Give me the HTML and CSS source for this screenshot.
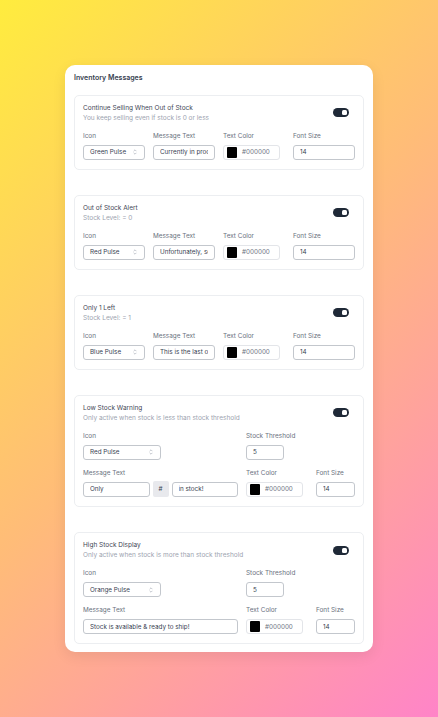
FILE: index.html
```html
<!DOCTYPE html>
<html lang="en">
<head>
    <meta charset="UTF-8">
    <meta name="viewport" content="width=device-width, initial-scale=1.0">
    <title>Inventory Messages</title>
    <link rel="stylesheet" href="styles.css">
</head>
<body>
    <div class="panel">
        <h2 class="panel-title">Inventory Messages</h2>
        <div class="sections">

            <div class="section">
                <div class="section-head">
                    <div>
                        <div class="section-title">Continue Selling When Out of Stock</div>
                        <div class="section-sub">You keep selling even if stock is 0 or less</div>
                    </div>
                    <span class="toggle"><span class="knob"></span></span>
                </div>
                <div class="grid4">
                    <div class="field">
                        <label>Icon</label>
                        <div class="select">Green Pulse
                            <svg width="4" height="6" viewBox="0 0 4 6"><path d="M0.6 2.2 2 0.8 3.4 2.2M0.6 3.8 2 5.2 3.4 3.8" fill="none" stroke="#9ca3af" stroke-width="0.6"/></svg>
                        </div>
                    </div>
                    <div class="field">
                        <label>Message Text</label>
                        <input class="input" type="text" value="Currently in production">
                    </div>
                    <div class="field">
                        <label>Text Color</label>
                        <div class="color"><span class="swatch"></span>#000000</div>
                    </div>
                    <div class="field">
                        <label>Font Size</label>
                        <input class="input" type="text" value="14">
                    </div>
                </div>
            </div>

            <div class="section">
                <div class="section-head">
                    <div>
                        <div class="section-title">Out of Stock Alert</div>
                        <div class="section-sub">Stock Level: = 0</div>
                    </div>
                    <span class="toggle"><span class="knob"></span></span>
                </div>
                <div class="grid4">
                    <div class="field">
                        <label>Icon</label>
                        <div class="select">Red Pulse
                            <svg width="4" height="6" viewBox="0 0 4 6"><path d="M0.6 2.2 2 0.8 3.4 2.2M0.6 3.8 2 5.2 3.4 3.8" fill="none" stroke="#9ca3af" stroke-width="0.6"/></svg>
                        </div>
                    </div>
                    <div class="field">
                        <label>Message Text</label>
                        <input class="input" type="text" value="Unfortunately, sold out!">
                    </div>
                    <div class="field">
                        <label>Text Color</label>
                        <div class="color"><span class="swatch"></span>#000000</div>
                    </div>
                    <div class="field">
                        <label>Font Size</label>
                        <input class="input" type="text" value="14">
                    </div>
                </div>
            </div>

            <div class="section">
                <div class="section-head">
                    <div>
                        <div class="section-title">Only 1 Left</div>
                        <div class="section-sub">Stock Level: = 1</div>
                    </div>
                    <span class="toggle"><span class="knob"></span></span>
                </div>
                <div class="grid4">
                    <div class="field">
                        <label>Icon</label>
                        <div class="select">Blue Pulse
                            <svg width="4" height="6" viewBox="0 0 4 6"><path d="M0.6 2.2 2 0.8 3.4 2.2M0.6 3.8 2 5.2 3.4 3.8" fill="none" stroke="#9ca3af" stroke-width="0.6"/></svg>
                        </div>
                    </div>
                    <div class="field">
                        <label>Message Text</label>
                        <input class="input" type="text" value="This is the last one!">
                    </div>
                    <div class="field">
                        <label>Text Color</label>
                        <div class="color"><span class="swatch"></span>#000000</div>
                    </div>
                    <div class="field">
                        <label>Font Size</label>
                        <input class="input" type="text" value="14">
                    </div>
                </div>
            </div>

            <div class="section">
                <div class="section-head">
                    <div>
                        <div class="section-title">Low Stock Warning</div>
                        <div class="section-sub">Only active when stock is less than stock threshold</div>
                    </div>
                    <span class="toggle"><span class="knob"></span></span>
                </div>
                <div class="grid-split">
                    <div class="field">
                        <label>Icon</label>
                        <div class="select half">Red Pulse
                            <svg width="4" height="6" viewBox="0 0 4 6"><path d="M0.6 2.2 2 0.8 3.4 2.2M0.6 3.8 2 5.2 3.4 3.8" fill="none" stroke="#9ca3af" stroke-width="0.6"/></svg>
                        </div>
                    </div>
                    <div class="field span2">
                        <label>Stock Threshold</label>
                        <input class="input small" type="text" value="5">
                    </div>
                    <div class="field">
                        <label>Message Text</label>
                        <div class="msg-group">
                            <input class="input" type="text" value="Only">
                            <span class="hash">#</span>
                            <input class="input" type="text" value="in stock!">
                        </div>
                    </div>
                    <div class="field">
                        <label>Text Color</label>
                        <div class="color"><span class="swatch"></span>#000000</div>
                    </div>
                    <div class="field">
                        <label>Font Size</label>
                        <input class="input" type="text" value="14">
                    </div>
                </div>
            </div>

            <div class="section">
                <div class="section-head">
                    <div>
                        <div class="section-title">High Stock Display</div>
                        <div class="section-sub">Only active when stock is more than stock threshold</div>
                    </div>
                    <span class="toggle"><span class="knob"></span></span>
                </div>
                <div class="grid-split">
                    <div class="field">
                        <label>Icon</label>
                        <div class="select half">Orange Pulse
                            <svg width="4" height="6" viewBox="0 0 4 6"><path d="M0.6 2.2 2 0.8 3.4 2.2M0.6 3.8 2 5.2 3.4 3.8" fill="none" stroke="#9ca3af" stroke-width="0.6"/></svg>
                        </div>
                    </div>
                    <div class="field span2">
                        <label>Stock Threshold</label>
                        <input class="input small" type="text" value="5">
                    </div>
                    <div class="field">
                        <label>Message Text</label>
                        <input class="input" type="text" value="Stock is available &amp; ready to ship!">
                    </div>
                    <div class="field">
                        <label>Text Color</label>
                        <div class="color"><span class="swatch"></span>#000000</div>
                    </div>
                    <div class="field">
                        <label>Font Size</label>
                        <input class="input" type="text" value="14">
                    </div>
                </div>
            </div>

        </div>
    </div>
</body>
</html>
```

FILE: styles.css
```css
* {
    box-sizing: border-box;
}
body {
    margin: 0;
    height: 100vh;
    display: flex;
    justify-content: center;
    align-items: center;
    background: linear-gradient(135deg, #ffec3e 0%, #ffbc78 48%, #ff84c8 100%);
    font-family: Inter, "Liberation Sans", sans-serif;
}
.panel {
    width: 308px;
    background-color: #fff;
    border-radius: 10px;
    padding: 9px 9px 8px;
    box-shadow: 0 4px 14px rgba(0,0,0,.08);
}
.panel-title {
    margin: 0 0 13px;
    font-size: 7px;
    line-height: 8px;
    font-weight: 600;
    color: #374151;
}
.sections {
    display: flex;
    flex-direction: column;
    gap: 25px;
}
.section {
    border: 1px solid #eceef1;
    border-radius: 5px;
    padding: 7px 8px 9px;
}
.section-head {
    display: flex;
    justify-content: space-between;
    align-items: center;
    margin-bottom: 9px;
}
.section-title {
    font-size: 6.5px;
    line-height: 10px;
    color: #3f4756;
}
.section-sub {
    font-size: 6.5px;
    line-height: 10px;
    color: #9ca3af;
}
.toggle {
    width: 16px;
    height: 9px;
    margin-right: 6px;
    border-radius: 4.5px;
    background-color: #1f2937;
    display: flex;
    justify-content: flex-end;
    align-items: center;
    padding-right: 2px;
}
.knob {
    width: 5px;
    height: 5px;
    border-radius: 1.5px;
    background-color: #fff;
}
.grid4 {
    display: grid;
    grid-template-columns: repeat(4, 1fr);
    gap: 8px;
}
.grid-split {
    display: grid;
    grid-template-columns: 1fr 62px 39px;
    column-gap: 8px;
    row-gap: 9px;
}
.span2 {
    grid-column: span 2;
}
.field label {
    display: block;
    font-size: 6.4px;
    line-height: 8px;
    color: #6b7280;
    margin-bottom: 5px;
}
.input,
.select,
.color {
    display: block;
    width: 100%;
    height: 15px;
    margin: 0;
    border: 1px solid #c3c7cd;
    border-radius: 3px;
    background-color: #fff;
    padding: 0 6px;
    font-family: inherit;
    font-size: 6.3px;
    color: #374151;
    outline: none;
}
.select {
    display: flex;
    justify-content: space-between;
    align-items: center;
    padding-right: 7px;
}
.select.half {
    width: 50%;
}
.input.small {
    width: 38px;
}
.color {
    display: flex;
    align-items: center;
    gap: 5px;
    width: 57px;
    padding: 0 3px;
    border-color: #e3e5e9;
    color: #6b7280;
}
.swatch {
    width: 10px;
    height: 11px;
    border-radius: 1px;
    background-color: #000;
}
.msg-group {
    display: flex;
    gap: 3px;
}
.msg-group .input {
    flex: 1;
    min-width: 0;
}
.hash {
    flex: 0 0 16px;
    height: 16px;
    margin-top: -0.5px;
    border-radius: 2px;
    background-color: #e8e9ed;
    display: flex;
    justify-content: center;
    align-items: center;
    font-size: 6.3px;
    color: #374151;
}
```
